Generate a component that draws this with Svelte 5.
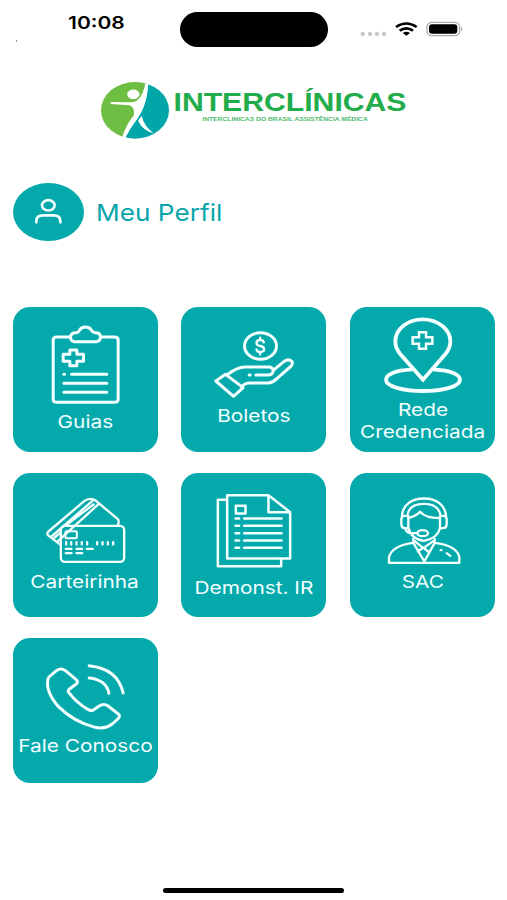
<script lang="ts">
    let tiles = [
        { icon: 'guias', label: ['Guias'], box: '22.5 21 435', height: 104 },
        { icon: 'boletos', label: ['Boletos'], box: '19.5 21 435', height: 98 },
        { icon: 'rede', label: ['Rede', 'Credenciada'], box: '22 21 435', height: 92 },
        { icon: 'carteirinha', label: ['Carteirinha'], box: '22.5 22.5 435', height: 98 },
        { icon: 'demonst', label: ['Demonst. IR'], box: '19.5 22.5 435', height: 104 },
        { icon: 'sac', label: ['SAC'], box: '22 22.5 435', height: 98 },
        { icon: 'fale', label: ['Fale Conosco'], box: '22.5 24 435', height: 97 },
    ]
</script>

<div class="screen">
    <header>
        <div class="time"><span>10:08</span></div>
        <div class="island"></div>
        <svg class="status" viewBox="1070 50 330 70">
            <g fill="#c9c9c9">
                <circle cx="1087" cy="101" r="6.5" />
                <circle cx="1109" cy="101" r="6.5" />
                <circle cx="1130" cy="101" r="6.5" />
                <circle cx="1151" cy="101" r="6.5" />
            </g>
            <g fill="none" stroke="#000" stroke-width="8">
                <path d="M1187 80Q1218 59 1249 80" />
                <path d="M1198 91Q1218 77 1238 91" />
            </g>
            <path d="M1207 98Q1218 90 1229 98L1218 106Z" />
            <rect x="1280" y="66" width="98" height="40" rx="14" fill="#fff" stroke="#aaa" stroke-width="4" />
            <rect x="1286" y="72" width="85" height="28" rx="9" />
            <path d="M1383 79Q1389 86 1383 93Z" fill="#888" />
        </svg>
        <div class="speck"></div>
    </header>

    <svg class="logo" viewBox="90 70 330 80">
        <g transform="translate(90 70) scale(.33333)">
            <clipPath id="disc"><ellipse cx="135" cy="121" rx="102" ry="85" /></clipPath>
            <g clip-path="url(#disc)">
                <path fill="#6fbe44" d="M20 20H172C171 76 158 110 137 136Q112 156 96 205H20Z" />
                <path fill="#00a6a8" d="M175 30H245V215H100Q118 177 144 143C160 121 174 85 175 30Z" />
                <path fill="#fff" d="M62 96L126 97C147 96 160 73 167 36L175 37C172 88 160 117 145 140Q121 170 101 205L96 203Q110 160 131 137Q136 114 119 106L62 102Z" />
                <path fill="#fff" d="M155 138L144 152Q161 184 191 189Q163 171 155 138Z" />
            </g>
            <ellipse cx="130" cy="73" rx="18.5" ry="14.5" fill="#fff" />
        </g>
        <text class="brand" x="173.5" y="111.2" textLength="233" lengthAdjust="spacingAndGlyphs">INTERCLÍNICAS</text>
        <text class="tagline" x="202.3" y="120.6" textLength="165.5" lengthAdjust="spacingAndGlyphs">INTERCLINICAS DO BRASIL ASSISTÊNCIA MÉDICA</text>
    </svg>

    <div class="profile">
        <div class="avatar">
            <svg viewBox="100 85 90 80">
                <ellipse cx="146" cy="107" rx="19" ry="15.5" />
                <path d="M110 158V154Q110 137 130 137H162Q182 137 182 154V158" />
            </svg>
        </div>
        <span>Meu Perfil</span>
    </div>

    <main>
        {#each tiles as tile}
            <div class="tile">
                <svg class={tile.icon} viewBox="{tile.box} {tile.height * 3}" height={tile.height}>
                    {#if tile.icon === 'guias'}
                        <path d="M194 111H154Q143 111 143 120V298Q143 307 154 307H327Q338 307 338 298V120Q338 111 327 111H286" />
                        <path d="M205 125Q194 122 195 110Q197 97 213 98Q219 97 222 91Q227 81 240 81Q253 81 258 91Q261 97 268 98Q284 97 285 110Q285 122 274 125Z" />
                        <path d="M193 150H214V163H234V184H214V197H193V184H173V163H193Z" />
                        <path d="M175 223H177M198 223H304M175 250H304M175 277H304" />
                    {:else if tile.icon === 'boletos'}
                        <ellipse cx="258" cy="138" rx="48" ry="40" />
                        <path d="M268 127Q266 120 257 120Q246 120 246 129Q246 136 257 138Q269 140 269 148Q269 156 257 156Q247 156 246 148M257 113V120M257 156V163" stroke-width="7" />
                        <path d="M124 243L153 223L206 263L177 289Z" />
                        <path d="M161 222Q188 202 211 201H286Q297 204 296 214Q294 224 280 225H244M224 225H227M296 211L328 185Q342 175 352 184Q356 190 350 198L308 235Q295 248 281 249H225Q207 250 202 261" />
                    {:else if tile.icon === 'rede'}
                        <path d="M241 239L172 161Q158 144 158 124C158 87 195 58 240 58S323 87 323 124Q323 144 309 161Z" />
                        <path d="M205 209C158 211 130 223 130 239C130 259 180 273 241 273S352 259 352 239C352 223 323 211 276 209" />
                        <path d="M229 97H250V112H269V131H250V146H229V131H210V112H229Z" stroke-width="7.5" />
                    {:else if tile.icon === 'carteirinha'}
                        <path d="M165 238L127 209Q123 203 129 198L236 107Q253 94 270 105L337 161Q342 166 337 179M139 212L260 107M158 226L279 116M179 181L264 117M147 216L165 201" />
                        <rect x="166" y="181" width="190" height="108" rx="12" />
                        <rect x="180" y="197" width="34" height="21" rx="3" stroke-width="6" />
                        <path d="M182 230V237M197 230V237M213 230V237M229 230V237M245 230V237M275 230V237M291 230V237M307 230V237M323 230V237M181 250H198M213 250H230M244 250H262M181 263H198M213 263H230" />
                    {:else if tile.icon === 'demonst'}
                        <path d="M158 279V89H282L347 140V279ZM282 89V140H347M156 103H130V302H320V281" />
                        <rect x="184" y="121" width="29" height="23" />
                        <path d="M183 159H194M209 159H321M183 181H194M209 181H321M183 203H194M209 203H321M183 225H194M209 225H321M183 247H194M209 247H321" />
                    {:else if tile.icon === 'sac'}
                        <path d="M178 151C180 119 206 99 244 99S307 119 310 151M194 151C197 127 216 115 244 115S290 127 294 151" />
                        <path d="M197 151H186Q176 151 176 161V176Q176 187 186 188H197ZM292 151H302Q312 151 312 161V176Q312 187 302 188H292Z" />
                        <path d="M198 157Q220 153 232 139Q249 158 290 158M198 188Q205 220 244 226Q284 219 292 188M188 188Q191 203 207 203H224" />
                        <ellipse cx="240" cy="203" rx="16" ry="9" />
                        <path d="M212 220V232Q148 240 139 275V292H350V275Q343 240 276 232V220M212 232L245 288L276 232M215 226L242 248L273 226M226 258L242 246L260 261M294 254H296M312 263L323 271" />
                    {:else}
                        <path d="M153 122Q166 112 180 122L212 149Q220 156 212 162L192 177Q184 183 192 190Q214 219 247 238Q259 246 268 237L281 228Q295 219 308 228L336 250Q347 258 337 267L320 282Q300 298 269 292Q205 276 159 230Q118 183 128 145Q130 140 153 122Z" />
                        <path d="M251 144C284 147 306 164 310 190M251 107Q337 116 353 189" />
                    {/if}
                </svg>
                {#each tile.label as line}
                    <span>{line}</span>
                {/each}
            </div>
        {/each}
    </main>

    <footer></footer>
</div>

<style>
    :global(body) {
        margin: 0;
        background: #fff;
    }

    .screen {
        box-sizing: border-box;
        width: 507px;
        height: 900px;
        display: flex;
        flex-direction: column;
        overflow: hidden;
        font-family: Inter, "Liberation Sans", sans-serif;
    }

    header {
        position: relative;
        display: flex;
        height: 70px;
        align-items: flex-start;
    }

    .time {
        width: 112.5px;
        padding: 11.5px 0 0 67.5px;
        font-size: 17.5px;
        line-height: 22px;
        font-weight: 600;
    }

    .time span {
        display: inline-block;
        transform: scaleX(1.2);
        transform-origin: left;
    }

    .island {
        width: 148px;
        height: 35px;
        margin-top: 12px;
        border-radius: 18px;
        background: #000;
    }

    .status {
        width: 110px;
        height: 23.33px;
        margin: 16.67px 0 0 28.67px;
    }

    .speck {
        position: absolute;
        top: 40px;
        left: 16px;
        width: 1px;
        height: 2px;
        background: #999;
    }

    .logo {
        width: 330px;
        height: 80px;
        margin-left: 90px;
    }

    .brand {
        font: bold 25.5px "Liberation Sans", sans-serif;
        fill: #22ac4b;
    }

    .tagline {
        font: bold 5.3px "Liberation Sans", sans-serif;
        fill: #4dba6d;
    }

    .profile {
        display: flex;
        align-items: center;
        gap: 12.5px;
        margin: 33px 0 0 13.3px;
        color: #08a5ab;
        font-size: 23.5px;
        line-height: 30px;
    }

    .profile span {
        padding-top: 1px;
        transform: scaleX(1.115);
        transform-origin: left;
    }

    .avatar {
        display: flex;
        align-items: center;
        justify-content: center;
        width: 70.7px;
        height: 58px;
        border-radius: 50%;
        background: #04a9ac;
    }

    .avatar svg {
        width: 30px;
        height: 26.67px;
        margin: 0 1px 1px 0;
    }

    .avatar svg,
    .tile svg {
        fill: none;
        stroke: #f4ffff;
        stroke-width: 9;
        stroke-linecap: round;
        stroke-linejoin: round;
    }

    .avatar svg {
        stroke-width: 8;
    }

    main {
        display: grid;
        grid-template-columns: 145px 145px 145px;
        grid-auto-rows: 144.5px;
        gap: 21px 23.8px;
        margin: 66px 0 0 12.5px;
    }

    .tile {
        display: flex;
        flex-direction: column;
        align-items: center;
        border-radius: 17px;
        background: #04a9ac;
        color: #f4ffff;
        font-size: 17.5px;
        line-height: 21.5px;
    }

    .tile svg {
        width: 145px;
        flex: none;
        overflow: visible;
    }

    .tile span {
        white-space: nowrap;
        transform: scaleX(1.19);
    }

    .tile .rede {
        stroke-width: 11.5;
        stroke-linejoin: miter;
    }

    .tile .demonst {
        stroke-width: 7.5;
    }

    .tile .carteirinha,
    .tile .sac {
        stroke-width: 7;
    }

    footer {
        width: 181px;
        height: 5px;
        margin: auto 0 7.5px 163.3px;
        border-radius: 3px;
        background: #000;
    }
</style>
